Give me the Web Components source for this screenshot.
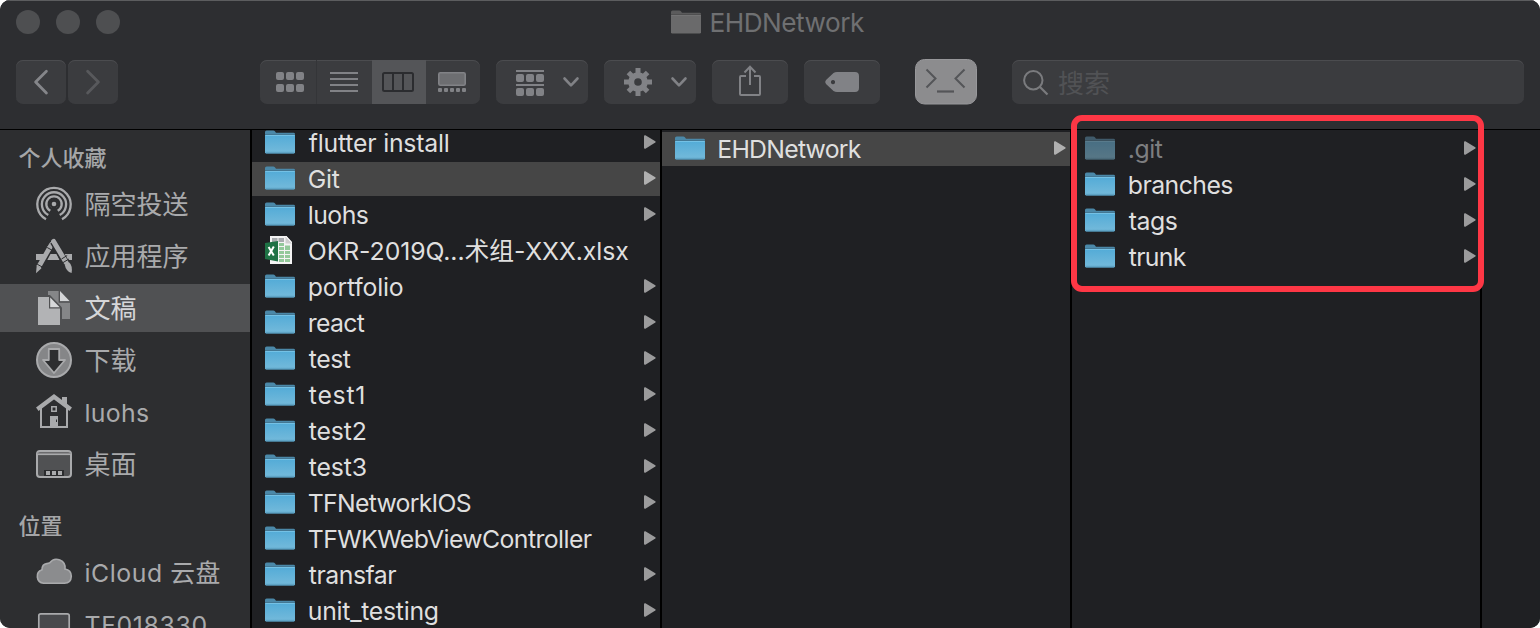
<!DOCTYPE html>
<html lang="zh-CN">
<head>
<meta charset="utf-8">
<title>EHDNetwork</title>
<style>
html,body{margin:0;background:#fff}
body{width:1540px;height:628px;overflow:hidden;font-family:Inter,"Noto Sans CJK SC",sans-serif}
</style>
</head>
<body>
<finder-window>
  <window-title slot="title" name="EHDNetwork"></window-title>
  <finder-toolbar slot="toolbar"></finder-toolbar>
  <side-bar slot="sidebar">
    <side-heading>个人收藏</side-heading>
    <side-item icon="airdrop">隔空投送</side-item>
    <side-item icon="apps">应用程序</side-item>
    <side-item icon="docs" selected>文稿</side-item>
    <side-item icon="download">下载</side-item>
    <side-item icon="home" ink="62.5">luohs</side-item>
    <side-item icon="desktop">桌面</side-item>
    <side-heading class="second">位置</side-heading>
    <side-item icon="cloud" ink="134">iCloud 云盘</side-item>
    <side-item icon="computer" ink="121">TF018330</side-item>
  </side-bar>
  <file-column slot="columns" scrolled>
    <file-row ink="140">flutter install</file-row>
    <file-row ink="31" selected>Git</file-row>
    <file-row ink="59">luohs</file-row>
    <file-row ink="318.5" icon="xlsx">OKR-2019Q...术组-XXX.xlsx</file-row>
    <file-row ink="94">portfolio</file-row>
    <file-row ink="56">react</file-row>
    <file-row ink="42">test</file-row>
    <file-row ink="54.5">test1</file-row>
    <file-row ink="57">test2</file-row>
    <file-row ink="57">test3</file-row>
    <file-row ink="162">TFNetworkIOS</file-row>
    <file-row ink="283">TFWKWebViewController</file-row>
    <file-row ink="87.5">transfar</file-row>
    <file-row ink="129">unit_testing</file-row>
  </file-column>
  <file-column slot="columns">
    <file-row ink="142.5" selected style="--text-start:14.3px">EHDNetwork</file-row>
  </file-column>
  <file-column slot="columns">
    <file-row ink="34" dimmed>.git</file-row>
    <file-row ink="103.5">branches</file-row>
    <file-row ink="48">tags</file-row>
    <file-row ink="58">trunk</file-row>
  </file-column>
  <file-column slot="columns" class="last"></file-column>
  <highlight-box slot="overlay"></highlight-box>
</finder-window>

<script>
const ICONS = {
  folder: ['0 0 30 24', `<defs><linearGradient id="g" x1="0" y1="0" x2="0" y2="1"><stop offset="0" stop-color="#53abd7"/><stop offset=".85" stop-color="#70b8da"/><stop offset="1" stop-color="#5ea6c8"/></linearGradient></defs>
    <path d="M0 2Q0 .4 1.6 .4H8.2Q9.3 .4 9.9 1.2L11 2.7H28.6Q30 2.7 30 4V10H0Z" fill="#4b88a8"/>
    <path d="M0 4H30V7H0Z" fill="#3d6f8b"/>
    <path d="M0 5H30V22.2Q30 23.6 28.6 23.6H1.4Q0 23.6 0 22.2Z" fill="url(#g)"/>
    <path d="M.4 5.4H29.6" stroke="#7cc6e8" stroke-width=".9"/><path d="M1 23.2H29" stroke="#4d8cab" stroke-width=".8"/>`],
  folderGray: ['0 0 30 24', `<path d="M0 2Q0 .4 1.6 .4H8.2Q9.3 .4 9.9 1.2L11 2.7H28.6Q30 2.7 30 4V10H0Z" fill="#5b5b5c"/>
    <path d="M0 4H30V7H0Z" fill="#4c4c4d"/><path d="M0 5H30V22.2Q30 23.6 28.6 23.6H1.4Q0 23.6 0 22.2Z" fill="#6a6a6b"/>
    <path d="M.4 5.4H29.6" stroke="#777778" stroke-width=".8"/>`],
  xlsx: ['0 0 30 30', `<path d="M5 1H21L27 7.5V29H5Z" fill="#f4f4f4"/><path d="M20.5 1V8.5H27Z" fill="#cfcfcf"/><path d="M20 1L27 8.5V7L21.5 1Z" fill="#fff"/>
    <path d="M7 3H12.5V7H7ZM13.5 3H19V7H13.5Z" fill="#a9acaf"/>
    <path d="M14 8H19V11H14ZM14 12H19V15H14ZM14 16H19V19H14ZM14 20H19V23H14ZM14 24H19V27H14ZM20 10.500H25V15H20ZM20 16H25V19H20ZM20 20H25V23H20ZM20 24H25V27H20Z" fill="#93c99a"/>
    <path d="M0 8L13 6V26.500L0 24Z" fill="#1f7245"/><path d="M3.600 12L8.800 20.600M8.800 11.600L3.600 20.600" stroke="#fff" stroke-width="2"/>`],
  arrow: ['0 0 12 14', `<path d="M0 1.200Q0 0 1.400 .3L11.300 6.200Q12.200 6.900 11.300 7.600L1.400 13.700Q0 14 0 12.800Z" fill="currentColor"/>`],
  airdrop: ['0 0 36 36', `<g fill="none" stroke="currentColor" stroke-width="2.300"><path d="M10 33.300A16.700 16.700 0 1 1 26 33.300"/><path d="M12.300 29A12.100 12.100 0 1 1 23.700 29"/><path d="M14.300 24.800A7.700 7.700 0 1 1 21.700 24.800"/></g>
    <path d="M15.800 21.600A4 4 0 1 1 20.200 21.600L18 19Z" fill="currentColor"/><circle cx="18" cy="18" r="4.300" fill="#2d2e30"/><circle cx="18" cy="18" r="2.300" fill="currentColor"/>`],
  apps: ['0 0 36 36', `<path d="M0 16H9L5.800 22H0ZM14.500 16H20.500L23.500 22H11.300ZM27 16H36V22H30.300Z" fill="currentColor"/>
    <path d="M14.200 8.800L2.600 29" stroke="currentColor" stroke-width="4.800"/><path d="M15.500 6.400L13.300 10.200" stroke="currentColor" stroke-width="4.800" stroke-linecap="round"/>
    <path d="M.7 27.600L5.500 30.300L0 35.200Z" fill="currentColor"/><path d="M11.200 9.500L16 12.200M1.200 26.200L6.200 29" stroke="#2d2e30" stroke-width="1"/>
    <path d="M17.300 3.600L33 30" stroke="#2d2e30" stroke-width="7"/><path d="M17.600 3.400L29.800 24" stroke="currentColor" stroke-width="5" stroke-linecap="round"/>
    <path d="M25.500 21L31.200 17.500M27 24.600L33 21" stroke="#2d2e30" stroke-width="1"/><path d="M28.700 26.500L32.800 24Q36.800 27.500 35.600 35Q30 33.500 28.700 26.500Z" fill="currentColor"/>`],
  docs: ['0 0 36 36', `<path d="M12 1H23V12H34V29H12Z" fill="#858688"/><path d="M24 1L34 11.500H24Z" fill="#d4d5d7"/><path d="M23.300 0V12H34" fill="none" stroke="#505153" stroke-width="1.300"/>
    <path d="M1 5H14L26 17.500V36H1Z" fill="#505153"/><path d="M2 7H13V18.500H24V35H2Z" fill="#b2b3b5"/><path d="M14.200 7.500L23.700 17.300H14.200Z" fill="#d7d8da"/>`],
  download: ['0 0 36 36', `<circle cx="18" cy="18" r="17" fill="#858688" stroke="currentColor" stroke-width="2"/><path d="M12.800 7H23.200V18H29L18 31L7 18H12.800Z" fill="#2d2e30" stroke="currentColor" stroke-width="1.800" stroke-linejoin="round"/>`],
  home: ['0 0 36 36', `<path d="M5 13V33H31V13" fill="none" stroke="currentColor" stroke-width="2"/><path d="M1.300 15.300L18 2.700L34.700 15.300" fill="none" stroke="currentColor" stroke-width="4.200"/><path d="M26 3H31V11L26 7Z" fill="currentColor"/>
    <path d="M15.800 12.800H20.200V17.200H15.800Z" fill="none" stroke="currentColor" stroke-width="1.500"/><path d="M14 22H22V33H14Z" fill="currentColor"/><path d="M20.500 25.500V28" stroke="#2d2e30" stroke-width="1"/>`],
  desktop: ['0 0 36 36', `<rect x="1" y="5" width="34" height="26" rx="3" fill="#505153" stroke="currentColor" stroke-width="2"/><path d="M1.500 6.500H34.500V8H1.500Z" fill="#858688"/><path d="M2 8.500H34" stroke="currentColor" stroke-width="1.200"/>
    <path d="M8 24H28V30H8Z" fill="#2b2c2e"/><path d="M10 25H14V29H10ZM16 25H20V29H16ZM22 25H26V29H22Z" fill="currentColor"/>`],
  cloud: ['0 0 36 36', `<path d="M7.500 29.200A6.900 6.900 0 0 1 6 15.800Q6 10.200 10.800 9.600Q12.600 9.400 13.800 8.800A8.500 8.500 0 0 1 29 15Q35.200 16 35.300 22.300Q35 29.200 28.500 29.200Z" fill="#8b8c8e" stroke="currentColor" stroke-width="1.600"/>`],
  computer: ['0 0 36 36', `<rect x="2.800" y="7.800" width="30.400" height="24" rx="2" fill="#48494c" stroke="currentColor" stroke-width="1.700"/>`],
  back: ['0 0 50 44', `<path d="M30.400 11.300L19.600 22L30.400 33" fill="none" stroke="#85868a" stroke-width="2.800" stroke-linecap="round" stroke-linejoin="round"/>`],
  forward: ['0 0 50 44', `<path d="M19.600 11.300L30.400 22L19.600 33" fill="none" stroke="#58595c" stroke-width="2.800" stroke-linecap="round" stroke-linejoin="round"/>`],
  grid: ['0 0 28 20', `<g fill="currentColor"><rect width="8" height="8" rx="2"/><rect x="10" width="8" height="8" rx="2"/><rect x="20" width="8" height="8" rx="2"/><rect y="12" width="8" height="8" rx="2"/><rect x="10" y="12" width="8" height="8" rx="2"/><rect x="20" y="12" width="8" height="8" rx="2"/></g>`],
  list: ['0 0 28 20', `<path d="M0 1H28M0 7H28M0 13H28M0 19H28" stroke="currentColor" stroke-width="2"/>`],
  columns: ['0 0 32 20', `<rect x="1" y="1" width="30" height="18" rx="1.500" fill="none" stroke="#2b2c2f" stroke-width="2"/><path d="M11 1V19M21 1V19" stroke="#2b2c2f" stroke-width="2"/>`],
  gallery: ['0 0 28 20', `<rect x=".8" y=".8" width="26.400" height="12.400" rx="1.500" fill="#6d6e71" stroke="currentColor" stroke-width="1.600"/><g fill="currentColor"><rect y="16" width="4" height="4" rx="1"/><rect x="6" y="16" width="4" height="4" rx="1"/><rect x="12" y="16" width="4" height="4" rx="1"/><rect x="18" y="16" width="4" height="4" rx="1"/><rect x="24" y="16" width="4" height="4" rx="1"/></g>`],
  group: ['0 0 28 26', `<g fill="currentColor"><rect width="28" height="2"/><rect y="14" width="28" height="2"/><rect y="4" width="8" height="8" rx="2"/><rect x="10" y="4" width="8" height="8" rx="2"/><rect x="20" y="4" width="8" height="8" rx="2"/><rect y="18" width="8" height="8" rx="2"/><rect x="10" y="18" width="8" height="8" rx="2"/><rect x="20" y="18" width="8" height="8" rx="2"/></g>`],
  gear: ['-14 -14 28 28', `<g stroke="currentColor" stroke-width="5"><path d="M0 -14V-8M0 14V8M-14 0H-8M14 0H8"/><path d="M-9.600 -9.600L-6 -6M9.600 9.600L6 6M-9.600 9.600L-6 6M9.600 -9.600L6 -6"/></g><circle r="6.800" fill="none" stroke="currentColor" stroke-width="6"/>`],
  chevron: ['0 0 16 10', `<path d="M1.500 1.500L8 8.300L14.500 1.500" fill="none" stroke="currentColor" stroke-width="2.600" stroke-linecap="round" stroke-linejoin="round"/>`],
  share: ['0 0 24 32', `<path d="M8 11H3Q2 11 2 12V29Q2 30 3 30H21Q22 30 22 29V12Q22 11 21 11H16" fill="none" stroke="currentColor" stroke-width="2"/><path d="M12 20V2M6.500 7.500L12 1.700L17.500 7.500" fill="none" stroke="currentColor" stroke-width="2"/>`],
  tag: ['0 0 34 20', `<path fill-rule="evenodd" d="M8.500 1Q10 0 12 0H30Q34 0 34 4V16Q34 20 30 20H12Q10 20 8.500 19L1 12Q-.7 10 1 8ZM8 8A2.100 2.100 0 1 0 8.010 8Z" fill="currentColor"/>`],
  terminal: ['0 0 62 45.5', `<rect x=".5" y=".5" width="61" height="44.500" rx="9" fill="#8c8c8e" stroke="#97979a"/><path d="M11.500 10.500L20.500 19.500L11.500 28.500M49.500 10.500L40.500 19.500L49.500 28.500" fill="none" stroke="#545558" stroke-width="2"/><path d="M22 32.500H39" stroke="#545558" stroke-width="2.200"/>`],
  search: ['0 0 26 26', `<circle cx="10.300" cy="10.300" r="9.200" fill="none" stroke="#7a7b7e" stroke-width="2"/><path d="M17 17L24.500 24.500" stroke="#7a7b7e" stroke-width="2.200"/>`]
};

function define(name, html, setup) {
  const template = document.createElement('template');
  template.innerHTML = html;
  customElements.define(name, class extends HTMLElement {
    connectedCallback() {
      if (this.shadowRoot) return;
      this.attachShadow({ mode: 'open' }).append(template.content.cloneNode(true));
      if (setup) setup(this, this.shadowRoot);
    }
  });
}

/* Spaces the glyphs so that the drawn part of a label spans the given width. */
const pen = document.createElement('canvas').getContext('2d');
function fitLabel(label, text, ink) {
  const style = getComputedStyle(label);
  pen.font = `${style.fontWeight} ${style.fontSize} ${style.fontFamily}`;
  const m = pen.measureText(text);
  const drawn = m.actualBoundingBoxRight + m.actualBoundingBoxLeft;
  label.style.marginLeft = m.actualBoundingBoxLeft + 'px';
  label.style.letterSpacing = (ink - drawn) / (text.length - 1) + 'px';
}

define('ui-icon', `<style>:host{display:block;flex:none}svg{display:block;width:100%;height:100%;overflow:visible}</style><svg></svg>`, (el, root) => {
  const [box, body] = ICONS[el.getAttribute('name')];
  const svg = root.querySelector('svg');
  svg.setAttribute('viewBox', box);
  svg.innerHTML = body;
});

define('window-title', `<style>
  :host{display:flex;height:44px;align-items:center;position:relative;padding-left:16px;box-sizing:border-box}
  .lights{display:flex;gap:16px}.lights i{width:24px;height:24px;border-radius:50%;background:#4e4f51}
  .name{display:flex;gap:10.500px;margin-left:551px;color:#6f7072;font-size:26.2px;line-height:44px;align-items:center}
  .name ui-icon{width:30px;height:24px}.name span{white-space:nowrap;padding-top:2px}
</style><div class="lights"><i></i><i></i><i></i></div><div class="name"><ui-icon name="folderGray"></ui-icon><span></span></div>`, (el, root) => {
  const span = root.querySelector('span');
  span.textContent = el.getAttribute('name');
  fitLabel(span, span.textContent, 152.5);
});

define('tool-button', `<style>
  :host{display:flex;box-sizing:border-box;height:44px;align-items:center;justify-content:center;border-radius:7px;background:#3b3c3f;box-shadow:inset 0 1px #4b4c4f;color:#818286;overflow:hidden}
</style><slot></slot>`);

define('finder-toolbar', `<style>
  :host{display:flex;height:44px;padding:16px 16px 0}
  .nav{display:flex;gap:2px}.nav tool-button{width:50px}.nav ui-icon{width:50px;height:44px}
  .views{width:220px;margin-left:142px;justify-content:flex-start}
  .views div{height:44px;display:flex;align-items:center;box-sizing:border-box;flex:none}
  .views .a{width:57px;padding-left:16px;border-right:1px solid #343538}
  .views .b{width:55px;padding-left:13px}
  .views .on{width:54px;padding-left:10px;background:#545558}
  .views .d{width:54px;padding-left:12px}
  .a ui-icon,.b ui-icon,.d ui-icon{width:28px;height:20px}.on ui-icon{width:32px;height:20px}
  .menu{width:92px;margin-left:16px;justify-content:flex-start;padding-left:20px}
  .menu .chev{width:16px;height:10px;margin-left:18.500px}
  .wide{width:76px;margin-left:16px}
  .term{width:62px;height:45.500px;margin:-1px 0 0 35px}
  .search{flex:1;margin-left:35px;justify-content:flex-start;padding-left:11px}
  .search ui-icon{width:26px;height:26px;margin-top:2px}
  .search span{font-size:26px;line-height:42px;color:#515255;margin-left:9px;padding-top:4px}
</style>
<div class="nav"><tool-button><ui-icon name="back"></ui-icon></tool-button><tool-button><ui-icon name="forward"></ui-icon></tool-button></div>
<tool-button class="views"><div class="a"><ui-icon name="grid"></ui-icon></div><div class="b"><ui-icon name="list"></ui-icon></div><div class="on"><ui-icon name="columns"></ui-icon></div><div class="d"><ui-icon name="gallery"></ui-icon></div></tool-button>
<tool-button class="menu"><ui-icon name="group" style="width:28px;height:26px;margin-top:2px"></ui-icon><ui-icon class="chev" name="chevron"></ui-icon></tool-button>
<tool-button class="menu"><ui-icon name="gear" style="width:28px;height:28px"></ui-icon><ui-icon class="chev" name="chevron"></ui-icon></tool-button>
<tool-button class="wide"><ui-icon name="share" style="width:24px;height:32px;margin-top:-2px"></ui-icon></tool-button>
<tool-button class="wide"><ui-icon name="tag" style="width:34px;height:20px"></ui-icon></tool-button>
<ui-icon class="term" name="terminal"></ui-icon>
<tool-button class="search"><ui-icon name="search"></ui-icon><span>搜索</span></tool-button>`);

define('side-bar', `<style>:host{display:flex;flex-direction:column;width:250px;flex:none;background:#2d2e30;color:#a9aaac;overflow:hidden}</style><slot></slot>`);

define('side-heading', `<style>
  :host{display:block;flex:none;height:44px;margin-top:6px;padding-left:18.500px;font-size:22px;font-weight:500;line-height:44px;color:#a5a6a8}
  :host(.second){margin-top:12px}
</style><slot></slot>`);

define('side-item', `<style>
  :host{display:flex;flex:none;height:48px;margin-bottom:4px;padding-left:36px;gap:12.500px;align-items:center;box-sizing:border-box}
  :host([selected]){background:#505153;color:#d5d6d8}
  ui-icon{width:36px;height:36px}
  span{font-size:26px;line-height:46px;padding-top:2px;white-space:nowrap}
  :host([ink]) span{font-size:24.800px;padding-left:1px}
</style><span><slot></slot></span>`, (el, root) => {
  const icon = document.createElement('ui-icon');
  icon.setAttribute('name', el.getAttribute('icon'));
  const span = root.querySelector('span');
  span.before(icon);
  if (el.hasAttribute('ink')) fitLabel(span, el.textContent, +el.getAttribute('ink'));
});

define('file-column', `<style>
  :host{display:flex;flex-direction:column;gap:2px;flex:none;width:410px;box-sizing:border-box;border-left:2px solid #000;background:#1f2023;padding-top:2px;overflow:hidden}
  :host([scrolled]){padding-top:0}
  :host([scrolled]) slot{display:flex;flex-direction:column;gap:2px;margin-top:-4px}
  :host(.last){width:auto;flex:1}
</style><slot></slot>`);

define('file-row', `<style>
  :host{display:flex;flex:none;height:34px;padding:0 4px 0 13px;align-items:flex-start;box-sizing:border-box;color:#dfdfdf}
  :host([selected]){background:#464646}
  .kind{width:30px;height:24px;margin-top:4px}
  .kind[name=xlsx]{height:30px;margin-top:1px}
  .text{padding-left:var(--text-start,13.800px);flex:1}
  .text span{display:block;font-size:24.800px;font-weight:440;line-height:33px;padding-top:1px;white-space:nowrap}
  .more{width:12px;height:14px;margin-top:9px;color:#9b9b9c}
  :host([selected]) .more{color:#b0b0b0}
  :host([icon]) .more{display:none}
  :host([dimmed]) .kind{opacity:.58;filter:saturate(.75)}
  :host([dimmed]) .text{color:#7d7e80}
</style><div class="text"><span><slot></slot></span></div><ui-icon class="more" name="arrow"></ui-icon>`, (el, root) => {
  const kind = document.createElement('ui-icon');
  kind.className = 'kind';
  kind.setAttribute('name', el.getAttribute('icon') || 'folder');
  root.querySelector('.text').before(kind);
  fitLabel(root.querySelector('.text span'), el.textContent, +el.getAttribute('ink'));
});

define('highlight-box', `<style>
  :host{position:absolute;left:1071px;top:115px;width:412.500px;height:176.500px;box-sizing:border-box;border:6px solid #fe3745;border-radius:11px}
</style>`);

define('finder-window', `<style>
  :host{display:flex;flex-direction:column;position:relative;width:1540px;height:628px;border-radius:10px;overflow:hidden;background:#2d2e30}
  header{height:130px;box-sizing:border-box;background:#2d2e31;border-bottom:1px solid #000;box-shadow:inset 0 1px #5c5d5f}
  main{display:flex;flex:1;min-height:0}
</style><header><slot name="title"></slot><slot name="toolbar"></slot></header><main><slot name="sidebar"></slot><slot name="columns"></slot></main><slot name="overlay"></slot>`);
</script>
</body>
</html>
